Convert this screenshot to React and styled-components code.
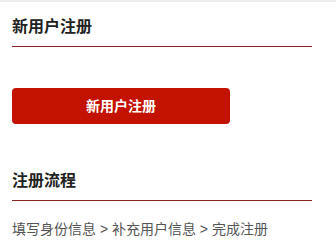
import React from 'react';
import styled, { createGlobalStyle } from 'styled-components';

const GlobalStyle = createGlobalStyle`
  html, body {
    margin: 0;
    padding: 0;
    background: #fff;
  }
  body {
    font-family: "Liberation Sans", "Noto Sans CJK SC", sans-serif;
    color: #333;
  }
`;

/** 페이지 맨 위의 옅은 회색 띠 */
const TopStrip = styled.div`
  height: 2px;
  background: #eeeeee;
`;

const Panel = styled.div`
  width: 300px;
  padding: 0 24px 0 12px;
`;

const Heading = styled.h2`
  margin: ${props => props.$first ? '0' : '32px'} 0 0;
  padding: 13px 0 7px;
  font-size: 16px;
  line-height: 24px;
  font-weight: 700;
  color: #222;
  border-bottom: 1px solid #8b2323;
`;

const RegisterButton = styled.button`
  display: block;
  width: 218px;
  height: 36px;
  margin-top: 41px;
  padding: 0;
  border: 0;
  border-radius: 4px;
  background: #c41200;
  color: #fff;
  font-family: "Liberation Sans", "Noto Sans CJK SC", sans-serif;
  font-size: 14px;
  font-weight: 700;
  line-height: 36px;
  text-align: center;
  cursor: pointer;
`;

const Steps = styled.p`
  margin: 18px 0 0;
  font-size: 14px;
  line-height: 20px;
  color: #555;
  white-space: nowrap;
`;

const App = () => {
  const steps = ['填写身份信息', '补充用户信息', '完成注册'];

  return (
    <>
      <GlobalStyle />
      <TopStrip />
      <Panel>
        <Heading $first>新用户注册</Heading>
        <RegisterButton type="button">新用户注册</RegisterButton>

        <Heading>注册流程</Heading>
        <Steps>{steps.join(' > ')}</Steps>
      </Panel>
    </>
  );
};

export default App;
